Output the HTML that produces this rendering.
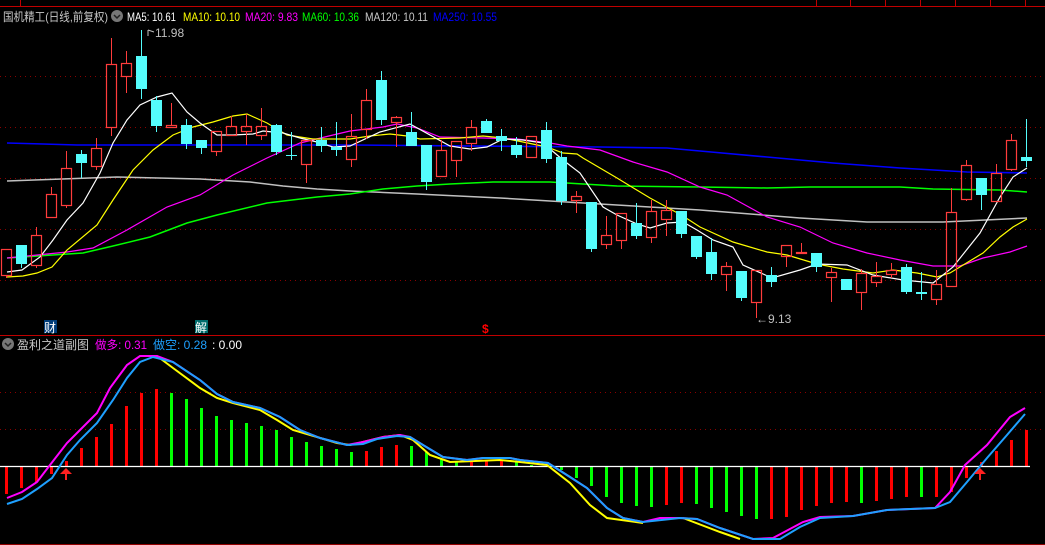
<!DOCTYPE html>
<html><head><meta charset="utf-8">
<style>
html,body{margin:0;padding:0;background:#000;width:1045px;height:545px;overflow:hidden;}
svg{position:absolute;left:0;top:0;}
.t{font-family:"Liberation Sans","Noto Sans CJK SC",sans-serif;font-size:12px;}
</style></head><body>
<svg id="s" width="1045" height="545" xmlns="http://www.w3.org/2000/svg">
<rect width="1045" height="545" fill="#000"/>
<line x1="0" y1="6.5" x2="1045" y2="6.5" stroke="#c00000" stroke-width="1"/>
<g stroke="#c00000"><line x1="20.5" y1="0" x2="20.5" y2="6"/><line x1="816.5" y1="0" x2="816.5" y2="6"/><line x1="850.5" y1="0" x2="850.5" y2="6"/><line x1="885.5" y1="0" x2="885.5" y2="6"/><line x1="920.5" y1="0" x2="920.5" y2="6"/><line x1="955.5" y1="0" x2="955.5" y2="6"/><line x1="990.5" y1="0" x2="990.5" y2="6"/><line x1="1025.5" y1="0" x2="1025.5" y2="6"/></g>
<g stroke="#8a0000" stroke-dasharray="1,4" stroke-width="1">
<line x1="0" y1="76.5" x2="1045" y2="76.5"/><line x1="0" y1="127.5" x2="1045" y2="127.5"/><line x1="0" y1="178.5" x2="1045" y2="178.5"/><line x1="0" y1="229.5" x2="1045" y2="229.5"/><line x1="0" y1="280.5" x2="1045" y2="280.5"/>
<line x1="0" y1="392.5" x2="1045" y2="392.5"/><line x1="0" y1="429.5" x2="1045" y2="429.5"/>
</g>
<line x1="0" y1="335.5" x2="1045" y2="335.5" stroke="#c00000"/>
<line x1="0" y1="544.5" x2="1045" y2="544.5" stroke="#900000"/>
<g id="ma" fill="none" stroke-width="1.2">
<polyline stroke="#0000ff" stroke-width="1.6" points="7,143 43,144 77,145 350,145 600,147 667,148 700,151 767,157 833,163 900,168 967,172 1027,173"/>
<polyline stroke="#c0c0c0" stroke-width="1.5" points="7,181 117,177 200,179 250,182 283,186 317,189 350,191 417,194 500,198 550,201 600,204 700,210 800,218 867,222 943,222 1027,218"/>
<polyline stroke="#00ff00" stroke-width="1.5" points="7,258 83,253 113,246 150,237 187,223 217,215 267,203 317,197 350,194 383,189 417,186 450,184 493,182 550,182 583,184 617,186 700,187 767,188 810,187 900,187 933,189 1000,190 1027,192"/>
<polyline stroke="#ff00ff" points="7,258 67,252 93,248 127,230 167,207 200,195 233,175 267,158 300,143 333,135 350,131 383,127 397,124 417,128 440,137 483,138 517,139 550,143 567,146 600,150 633,162 667,172 700,187 727,195 767,217 800,227 833,243 867,253 900,260 933,266 960,266 983,258 1010,252 1027,246"/>
<polyline stroke="#ffff00" points="7,277 23,276 37,273 52,267 67,250 97,225 113,200 133,170 153,150 173,135 193,127 213,122 233,116 247,114 267,123 287,135 313,139 350,139 370,136 390,134 407,136 420,139 460,138 483,136 503,138 523,142 547,147 563,153 577,154 583,158 617,178 650,198 683,216 700,227 733,242 767,252 787,255 817,264 843,269 873,273 893,270 917,273 937,277 950,273 983,253 1000,237 1013,227 1027,219"/>
<polyline stroke="#ffffff" points="7,272 22,270 40,257 53,240 67,220 83,203 100,173 113,143 127,120 140,105 157,97 172,93 187,112 200,123 217,135 233,135 253,134 263,131 283,133 300,138 317,142 333,147 350,146 380,132 410,124 450,146 470,149 487,147 503,139 523,140 543,143 563,160 580,173 603,207 617,215 637,224 650,228 667,223 683,222 697,230 713,240 733,247 743,265 772,278 800,270 817,264 847,265 873,275 903,280 933,283 953,267 980,233 1000,197 1013,177 1027,168"/>
</g>
<g id="cd"></g>
<g id="sub"></g>
<line x1="0" y1="466.5" x2="1030" y2="466.5" stroke="#ffffff" stroke-width="1.2"/>
<g fill="none" stroke-width="2">
<polyline stroke="#ffff00" points="157,356 173,368 200,388 217,398 233,403 260,410 277,420 293,430 317,437 337,443 350,445 363,442 383,437 400,435 413,440 430,455 450,462 500,460 520,462 547,465 570,483 590,505 607,518 643,523"/>
<polyline stroke="#ffff00" points="683,518 720,532 740,539"/>
<polyline stroke="#ff00ff" points="7,498 22,492 37,482 50,465 67,443 80,430 97,413 110,388 127,365 140,356 157,356 173,362 200,380 217,394 233,402 260,408 280,417 300,430 320,438 347,445 363,442 383,437 400,435 410,437 423,445 443,457 467,460 483,458 510,458 520,460 548,463 570,477 587,488 607,508 623,518 643,522 660,518 680,518 697,519 720,528 753,539 773,538 803,522 820,517 853,516 887,510 935,508 950,492 965,465 987,445 1010,417 1025,408"/>
<polyline stroke="#1ea0ff" points="7,504 22,499 37,489 52,478 67,455 80,440 97,423 113,400 127,378 140,362 153,357 173,362 200,380 217,394 233,402 260,408 280,417 300,430 320,438 347,445 363,444 377,439 397,436 410,437 423,445 443,457 467,460 483,458 510,458 520,460 548,463 570,477 587,488 607,508 623,518 643,522 680,518 697,519 720,528 753,539 780,539 800,527 820,518 853,516 887,510 935,508 950,502 967,482 987,458 1007,435 1025,414"/>
</g>
<g fill="#ff2020"><polygon points="60,474 66,468 72,474"/><rect x="65" y="473" width="2" height="7"/><polygon points="974,474 980,468 986,474"/><rect x="979" y="473" width="2" height="7"/></g>
<line x1="148" y1="30" x2="148" y2="36" stroke="#c0c0c0"/><line x1="148" y1="30" x2="154" y2="32" stroke="#c0c0c0"/>
<text x="155" y="37" class="t" fill="#c0c0c0">11.98</text>
<text x="756" y="323" class="t" fill="#c0c0c0">←9.13</text>
<text x="3" y="21" class="t" fill="#c8c8c8" textLength="105" lengthAdjust="spacingAndGlyphs">国机精工(日线,前复权)</text>
<circle cx="117" cy="16" r="6" fill="#777"/><path d="M114,15 l3,3 l3,-3" stroke="#222" stroke-width="1.5" fill="none"/>
<text x="127" y="21" class="t" fill="#ffffff" textLength="49" lengthAdjust="spacingAndGlyphs">MA5: 10.61</text>
<text x="183" y="21" class="t" fill="#ffff00" textLength="57" lengthAdjust="spacingAndGlyphs">MA10: 10.10</text>
<text x="245" y="21" class="t" fill="#ff00ff" textLength="53" lengthAdjust="spacingAndGlyphs">MA20: 9.83</text>
<text x="302" y="21" class="t" fill="#00ff00" textLength="57" lengthAdjust="spacingAndGlyphs">MA60: 10.36</text>
<text x="365" y="21" class="t" fill="#c8c8c8" textLength="63" lengthAdjust="spacingAndGlyphs">MA120: 10.11</text>
<text x="433" y="21" class="t" fill="#0000ff" textLength="64" lengthAdjust="spacingAndGlyphs">MA250: 10.55</text>
<rect x="44" y="320" width="13" height="13" fill="#003c78"/><text x="44" y="332" class="t" fill="#fff">财</text>
<rect x="195" y="320" width="13" height="13" fill="#006c6c"/><text x="195" y="332" class="t" fill="#fff">解</text>
<text x="482" y="333" class="t" fill="#ff0000" font-weight="bold">$</text>
<circle cx="8" cy="344" r="6" fill="#777"/><path d="M5,343 l3,3 l3,-3" stroke="#222" stroke-width="1.5" fill="none"/>
<text x="17" y="349" class="t" fill="#c8c8c8" textLength="72" lengthAdjust="spacingAndGlyphs">盈利之道副图</text>
<text x="95" y="349" class="t" fill="#ff00ff" textLength="52" lengthAdjust="spacingAndGlyphs">做多: 0.31</text>
<text x="153" y="349" class="t" fill="#1ea0ff" textLength="54" lengthAdjust="spacingAndGlyphs">做空: 0.28</text>
<text x="212" y="349" class="t" fill="#ffffff" textLength="30" lengthAdjust="spacingAndGlyphs">: 0.00</text>
</svg>
<script>
var C=[[1,249,275,249,278],[0,245,264,245,268],[1,235,265,227,268],[1,194,217,187,217],[1,168,205,151,208],[0,154,163,150,178],[1,148,166,138,170],[1,64,127,38,136],[1,63,76,51,93],[0,56,89,30,99],[0,100,126,96,132],[1,125,127,103,127],[0,125,144,119,149],[0,140,148,140,154],[1,131,151,131,156],[1,126,135,116,135],[1,126,131,114,145],[1,126,135,108,140],[0,125,152,124,155],[0,155,156,132,160],[1,140,164,140,183],[0,140,146,127,152],[0,147,150,122,156],[1,136,159,114,167],[1,100,129,89,139],[0,80,120,71,125],[1,117,122,116,147],[0,132,146,112,146],[0,145,182,145,190],[1,150,176,140,176],[1,141,160,141,177],[1,127,143,120,151],[0,121,133,119,133],[0,136,141,129,151],[0,145,155,137,158],[1,136,157,136,157],[0,130,159,122,163],[0,157,201,151,205],[1,196,200,191,213],[0,202,249,202,252],[1,235,244,216,249],[1,213,240,213,249],[0,223,236,203,239],[1,211,237,200,243],[1,210,219,200,236],[0,211,234,211,238],[0,236,257,236,259],[0,252,274,238,280],[1,266,274,262,291],[0,271,298,271,301],[1,270,302,270,318],[0,275,282,267,287],[1,245,256,245,267],[1,252,253,243,253],[0,253,267,253,272],[1,272,277,268,302],[0,279,290,279,290],[1,273,292,269,310],[1,276,282,262,287],[1,270,274,263,278],[0,267,292,264,294],[0,292,294,272,300],[1,284,299,270,305],[1,212,286,188,287],[1,165,199,160,201],[0,178,195,178,210],[1,173,201,164,201],[1,140,169,134,171],[0,157,161,119,167]];
var g=document.getElementById("cd"),h="";
C.forEach(function(c,i){var x=1+15*i,cx=x+5.5,col=c[0]?"#ff3c3c":"#54fcfc";
 if(c[3]<c[1])h+='<line x1="'+cx+'" y1="'+c[3]+'" x2="'+cx+'" y2="'+c[1]+'" stroke="'+col+'"/>';
 if(c[4]>c[2])h+='<line x1="'+cx+'" y1="'+c[2]+'" x2="'+cx+'" y2="'+c[4]+'" stroke="'+col+'"/>';
 var hh=Math.max(c[2]-c[1],1);
 if(c[0])h+='<rect x="'+(x+0.5)+'" y="'+(c[1]+0.5)+'" width="10" height="'+hh+'" fill="none" stroke="'+col+'" stroke-width="1.2"/>';
 else h+='<rect x="'+x+'" y="'+c[1]+'" width="11" height="'+hh+'" fill="'+col+'"/>';
});
g.innerHTML=h;
var B=[[1,494],[1,488],[1,482],[1,474],[1,461],[1,448],[1,437],[1,424],[1,406],[1,393],[1,389],[0,393],[0,399],[0,408],[0,416],[0,420],[0,423],[0,426],[0,430],[0,437],[0,442],[0,446],[0,449],[0,452],[1,451],[1,447],[1,445],[0,446],[0,452],[0,459],[0,462],[1,462],[1,460],[1,460],[0,461],[0,465],[0,466],[0,470],[0,478],[0,486],[0,497],[0,503],[0,506],[0,507],[1,505],[1,503],[0,504],[0,508],[0,512],[0,516],[0,519],[1,519],[1,517],[1,510],[1,506],[1,503],[1,502],[0,503],[1,501],[1,499],[1,497],[0,497],[1,497],[1,492],[1,478],[1,462],[1,451],[1,440],[1,430]];
var s="";B.forEach(function(b,i){var x=5+15*i,y=b[1],t=Math.min(y,466),hh=Math.abs(y-466);if(hh<1)return;
 s+='<rect x="'+x+'" y="'+t+'" width="3" height="'+hh+'" fill="'+(b[0]?"#ff0000":"#00ff00")+'"/>';});
document.getElementById("sub").innerHTML=s;
</script>
</body></html>
